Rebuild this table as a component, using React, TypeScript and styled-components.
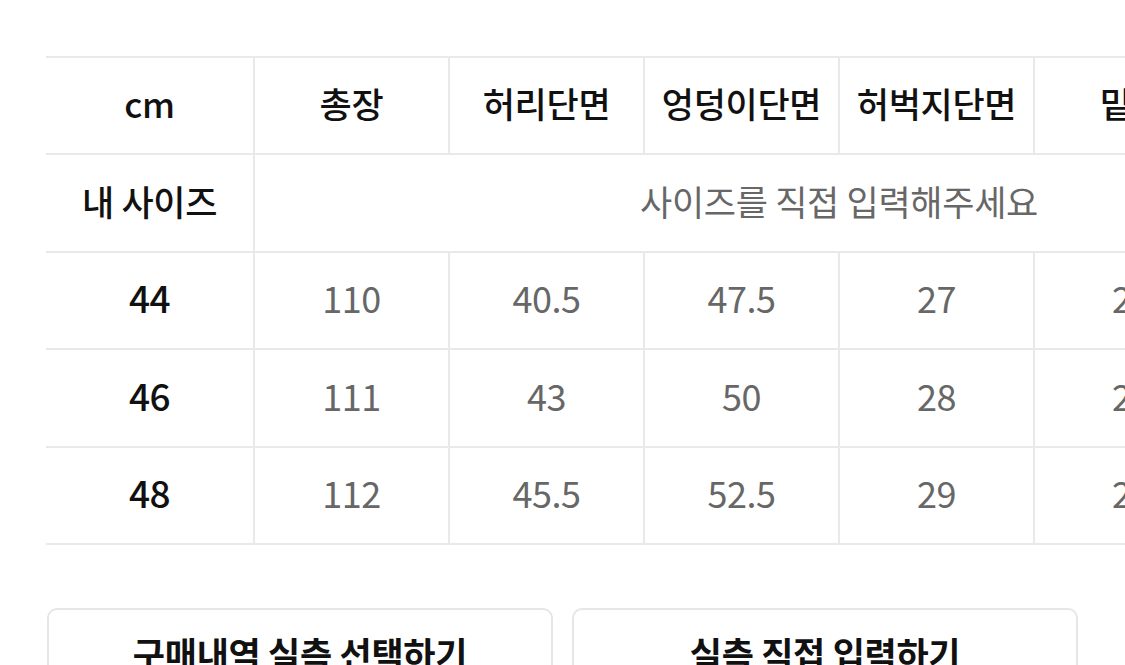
import React from "react";
import styled, { createGlobalStyle } from "styled-components";

const Global = createGlobalStyle`
  html, body { margin: 0; padding: 0; background: #fff; }
  body {
    font-family: "Noto Sans CJK KR", "Noto Sans", sans-serif;
    overflow: hidden;
  }
`;

const Page = styled.div`
  width: 1125px;
  height: 665px;
  overflow: hidden;
  padding: 56px 0 0 46px;
  box-sizing: border-box;
`;

const TableScroll = styled.div`
  overflow: hidden;
  width: 1079px;
`;

const Grid = styled.div`
  display: grid;
  grid-template-columns: 207px repeat(6, 193px);
  grid-auto-rows: 95.4px;
  gap: 2px;
  padding: 2px 0;
  background: #e9e9e9;
  width: max-content;
`;

const Cell = styled.div<{ $span?: number; $tone?: "head" | "label" | "value" | "hint" }>`
  background: #fff;
  display: flex;
  align-items: center;
  justify-content: center;
  padding-bottom: 6px;
  box-sizing: border-box;
  grid-column: ${(p) => (p.$span ? `span ${p.$span}` : "auto")};
  white-space: nowrap;
  letter-spacing: ${(p) => (p.$tone === "value" || p.$tone === "label" ? "-0.5px" : "-0.3px")};
  color: ${(p) => (p.$tone === "value" || p.$tone === "hint" ? "#676767" : "#111")};
  font-size: ${(p) => (p.$tone === "value" ? "36px" : p.$tone === "label" ? "37px" : "35px")};
  font-weight: ${(p) => (p.$tone === "label" || p.$tone === "head" ? 500 : 400)};
`;

const Actions = styled.div`
  display: flex;
  gap: 19px;
  margin-top: 63px;
  padding-left: 1px;
`;

const ActionButton = styled.button`
  width: 506px;
  height: 100px;
  box-sizing: border-box;
  border: 2px solid #e6e6e6;
  border-radius: 10px;
  background: #fff;
  padding: 17px 0 0;
  display: flex;
  justify-content: center;
  align-items: flex-start;
  font-family: "Noto Sans CJK KR", "Noto Sans", sans-serif;
  font-size: 35px;
  font-weight: 600;
  letter-spacing: -0.3px;
  color: #111;
`;

const headers = ["총장", "허리단면", "엉덩이단면", "허벅지단면", "밑위", "밑단단면"];
const rows: { size: string; values: string[] }[] = [
  { size: "44", values: ["110", "40.5", "47.5", "27", "27", "19"] },
  { size: "46", values: ["111", "43", "50", "28", "28", "20"] },
  { size: "48", values: ["112", "45.5", "52.5", "29", "29", "21"] },
];

export default function App() {
  return (
    <Page>
      <Global />
      <TableScroll>
        <Grid>
          <Cell $tone="head">cm</Cell>
          {headers.map((h) => (
            <Cell key={h} $tone="head">{h}</Cell>
          ))}
          <Cell $tone="head">내 사이즈</Cell>
          <Cell $tone="hint" $span={6}>사이즈를 직접 입력해주세요</Cell>
          {rows.map((r) => (
            <React.Fragment key={r.size}>
              <Cell $tone="label">{r.size}</Cell>
              {r.values.map((v, i) => (
                <Cell key={i} $tone="value">{v}</Cell>
              ))}
            </React.Fragment>
          ))}
        </Grid>
      </TableScroll>
      <Actions>
        <ActionButton>구매내역 실측 선택하기</ActionButton>
        <ActionButton>실측 직접 입력하기</ActionButton>
      </Actions>
    </Page>
  );
}
